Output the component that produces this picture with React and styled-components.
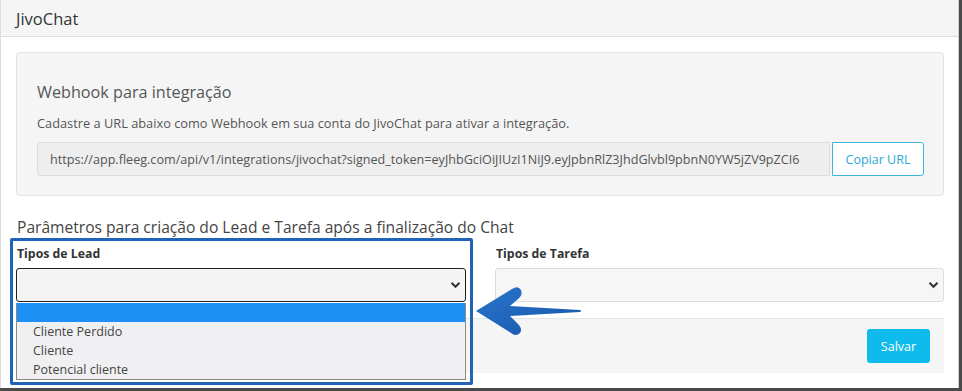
import React from "react";
import styled, { createGlobalStyle } from "styled-components";

const Global = createGlobalStyle`
  html, body { margin: 0; padding: 0; background: #fff; }
  body { font-family: "Open Sans", "Noto Sans", sans-serif; color: #555; }
  * { box-sizing: border-box; }
`;

const Frame = styled.div`
  width: 962px;
  height: 391px;
  background: #4a4a4a;
  position: relative;
  overflow: hidden;
`;

const Card = styled.div`
  width: 959px;
  height: 388px;
  background: #fff;
  border-left: 1px solid #ddd;
  border-right: 1px solid #d0d0d0;
  display: flex;
  flex-direction: column;
`;

const Header = styled.div`
  height: 37px;
  background: #f5f5f5;
  border-bottom: 1px solid #ddd;
  padding: 0 15px;
  display: flex;
  align-items: center;
  font-size: 16.5px;
  color: #333;
`;

const Body = styled.div`
  padding: 15px 14px 0 15px;
  display: flex;
  flex-direction: column;
`;

const Well = styled.div`
  background: #f5f5f5;
  border: 1px solid #e3e3e3;
  border-radius: 4px;
  padding: 27px 19px 19px 20px;
  display: flex;
  flex-direction: column;
`;

const WellTitle = styled.h3`
  margin: 0;
  font-size: 16.2px;
  font-weight: 400;
  line-height: 24px;
  color: #555;
`;

const WellText = styled.p`
  margin: 10px 0 10px;
  font-size: 12.8px;
  line-height: 18px;
  color: #555;
`;

const InputGroup = styled.div`
  display: flex;
  height: 34px;
`;

const UrlInput = styled.div`
  flex: 1;
  background: #eee;
  border: 1px solid #ddd;
  border-radius: 3px 0 0 3px;
  padding: 0 12px;
  display: flex;
  align-items: center;
  font-size: 12.6px;
  color: #555;
  white-space: nowrap;
  overflow: hidden;
`;

const OutlineButton = styled.button`
  margin-left: 2px;
  width: 92px;
  background: #fff;
  border: 1px solid #3fb5dd;
  border-radius: 0 3px 3px 0;
  color: #2aa9d9;
  font-family: inherit;
  font-size: 12.5px;
`;

const SectionTitle = styled.h4`
  margin: 20px 0 0 1px;
  font-size: 15.6px;
  font-weight: 400;
  line-height: 22px;
  color: #444;
`;

const Row = styled.div`
  display: grid;
  grid-template-columns: 450px 449px;
  column-gap: 29px;
  margin-top: 2px;
`;

const Field = styled.div`
  display: flex;
  flex-direction: column;
`;

const Label = styled.label`
  font-size: 12.3px;
  font-weight: 700;
  color: #333;
  line-height: 18px;
  margin: 5px 0 5px 1px;
`;

const Select = styled.div`
  height: 34px;
  border: 1px solid ${(p) => (p.$focused ? "#222" : "#ddd")};
  border-radius: 3px;
  background: ${(p) => (p.$focused ? "#f4f4f4" : "#f6f6f6")};
  display: flex;
  align-items: center;
  justify-content: flex-end;
  padding-right: 4px;
  color: #333;
`;

const Footer = styled.div`
  margin-top: 16px;
  height: 55px;
  background: #f5f5f5;
  border-top: 1px solid #e5e5e5;
  display: flex;
  align-items: center;
  justify-content: flex-end;
  padding-right: 14px;
`;

const SaveButton = styled.button`
  width: 63px;
  height: 34px;
  background: #0fbbec;
  border: none;
  border-radius: 3px;
  color: #fff;
  font-family: inherit;
  font-size: 12.5px;
`;

const Highlight = styled.div`
  position: absolute;
  left: 10px;
  top: 238px;
  width: 463px;
  height: 147px;
  border: 3px solid #1f64b8;
  border-radius: 2px;
`;

const Dropdown = styled.ul`
  position: absolute;
  left: 16px;
  top: 303px;
  width: 450px;
  height: 77px;
  margin: 0;
  padding: 0;
  list-style: none;
  background: #f0f0f2;
  border: 1px solid #8a8a8a;
  border-top: none;
  font-size: 12.5px;
  color: #444;
`;

const Option = styled.li`
  height: 19px;
  line-height: 19px;
  padding-left: 16px;
  background: ${(p) => (p.$active ? "#1e8ff5" : "transparent")};
  color: ${(p) => (p.$active ? "#fff" : "#444")};
`;

const Arrow = styled.svg`
  position: absolute;
  left: 474px;
  top: 284px;
`;

const Chevron = () => (
  <svg width="11" height="8" viewBox="0 0 11 8">
    <path d="M1.5 1.8 L5.5 5.8 L9.5 1.8" fill="none" stroke="#333" strokeWidth="2" />
  </svg>
);

export default function App() {
  return (
    <Frame>
      <Global />
      <Card>
        <Header>JivoChat</Header>
        <Body>
          <Well>
            <WellTitle>Webhook para integração</WellTitle>
            <WellText>
              Cadastre a URL abaixo como Webhook em sua conta do JivoChat para ativar a integração.
            </WellText>
            <InputGroup>
              <UrlInput>
                https://app.fleeg.com/api/v1/integrations/jivochat?signed_token=eyJhbGciOiJIUzI1NiJ9.eyJpbnRlZ3JhdGlvbl9pbnN0YW5jZV9pZCI6
              </UrlInput>
              <OutlineButton>Copiar URL</OutlineButton>
            </InputGroup>
          </Well>
          <SectionTitle>Parâmetros para criação do Lead e Tarefa após a finalização do Chat</SectionTitle>
          <Row>
            <Field>
              <Label>Tipos de Lead</Label>
              <Select $focused>
                <Chevron />
              </Select>
            </Field>
            <Field>
              <Label>Tipos de Tarefa</Label>
              <Select>
                <Chevron />
              </Select>
            </Field>
          </Row>
          <Footer>
            <SaveButton>Salvar</SaveButton>
          </Footer>
        </Body>
      </Card>
      <Dropdown>
        <Option $active>&nbsp;</Option>
        <Option>Cliente Perdido</Option>
        <Option>Cliente</Option>
        <Option>Potencial cliente</Option>
      </Dropdown>
      <Highlight />
      <Arrow width="110" height="54" viewBox="0 0 110 54">
        <defs>
          <linearGradient id="ag" x1="0" y1="0" x2="1" y2="1">
            <stop offset="0" stopColor="#2a74cc" />
            <stop offset="1" stopColor="#1556a8" />
          </linearGradient>
        </defs>
        <path
          d="M2 27 L38 5 Q44 1 47 6 Q49 11 44 15 L36 22 L106 26 Q108 27 106 28 L36 32 L44 40 Q49 45 46 49 Q42 53 37 49 Z"
          fill="url(#ag)"
        />
      </Arrow>
    </Frame>
  );
}
